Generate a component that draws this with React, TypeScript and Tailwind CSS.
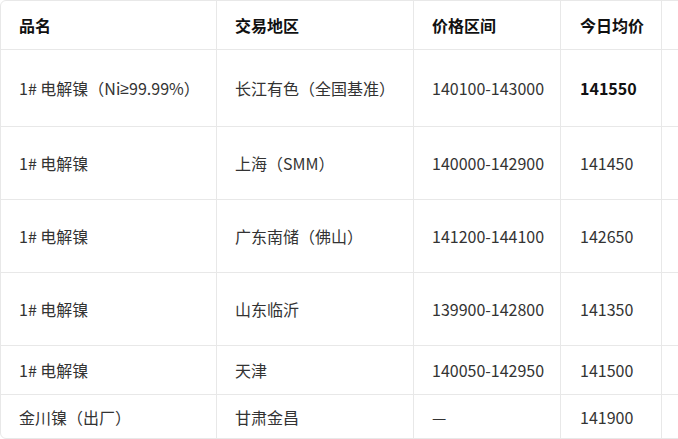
import React from "react";

const rows: { name: React.ReactNode; region: string; range: string; avg: string; bold?: boolean; h: string }[] = [
  {
    name: (
      <>
        1# 电解镍（Ni<span style={{ fontFamily: '"Noto Sans", sans-serif' }}>≥</span>99.99%）
      </>
    ),
    region: "长江有色（全国基准）",
    range: "140100-143000",
    avg: "141550",
    bold: true,
    h: "h-[77px]",
  },
  { name: "1# 电解镍", region: "上海（SMM）", range: "140000-142900", avg: "141450", h: "h-[73px]" },
  { name: "1# 电解镍", region: "广东南储（佛山）", range: "141200-144100", avg: "142650", h: "h-[73px]" },
  { name: "1# 电解镍", region: "山东临沂", range: "139900-142800", avg: "141350", h: "h-[73px]" },
  { name: "1# 电解镍", region: "天津", range: "140050-142950", avg: "141500", h: "h-[49px]" },
  { name: "金川镍（出厂）", region: "甘肃金昌", range: "—", avg: "141900", h: "h-[43px]" },
];

const font = { fontFamily: '"Noto Sans CJK SC", "Noto Sans", sans-serif' };

export default function App() {
  return (
    <div className="w-[678px] h-[439px] overflow-hidden bg-white" style={font}>
      <div className="w-[900px] border border-[#e8e8e8] rounded-[6px] text-[16px] text-[#333]">
        <div className="flex h-[49px] border-b border-[#e8e8e8] font-bold text-[#111]">
          <div className="w-[216px] border-r border-[#e8e8e8] flex items-center pl-[18px]">品名</div>
          <div className="w-[197px] border-r border-[#e8e8e8] flex items-center pl-[18px]">交易地区</div>
          <div className="w-[147px] border-r border-[#e8e8e8] flex items-center pl-[18px]">价格区间</div>
          <div className="w-[101px] border-r border-[#e8e8e8] flex items-center pl-[19px]">今日均价</div>
          <div className="w-[200px] border-r border-[#e8e8e8]"></div>
        </div>
        {rows.map((r, i) => (
          <div key={i} className={`flex ${r.h} ${i < rows.length - 1 ? "border-b border-[#e8e8e8]" : ""}`}>
            <div className="w-[216px] border-r border-[#e8e8e8] flex items-center pl-[18px]">{r.name}</div>
            <div className="w-[197px] border-r border-[#e8e8e8] flex items-center pl-[18px]">{r.region}</div>
            <div className="w-[147px] border-r border-[#e8e8e8] flex items-center pl-[18px]">{r.range}</div>
            <div className={`w-[101px] border-r border-[#e8e8e8] flex items-center pl-[19px] ${r.bold ? "font-bold text-[#111]" : ""}`}>{r.avg}</div>
            <div className="w-[200px] border-r border-[#e8e8e8]"></div>
          </div>
        ))}
      </div>
    </div>
  );
}
